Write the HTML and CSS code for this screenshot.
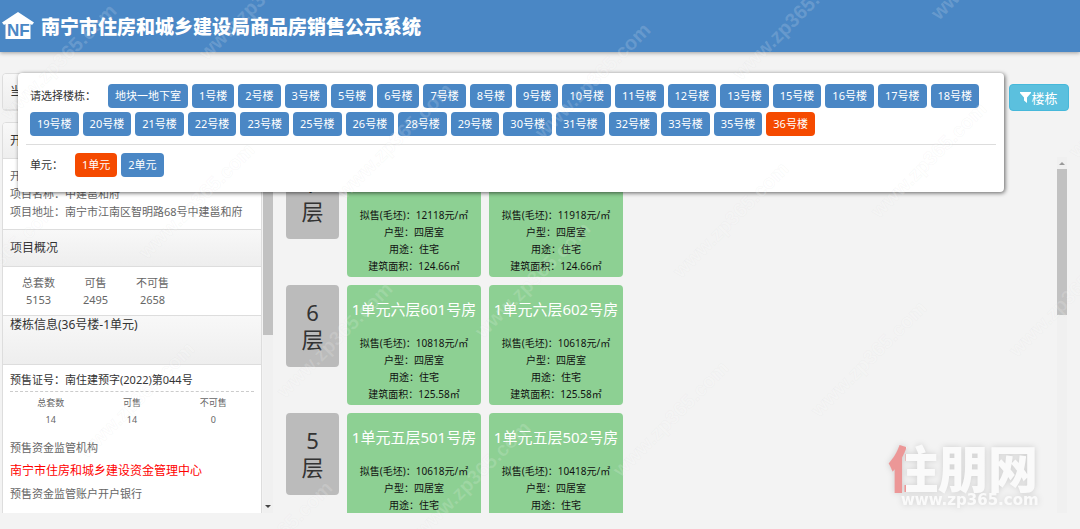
FILE: index.html
```html
<!DOCTYPE html>
<html lang="zh-CN">
<head>
<meta charset="utf-8">
<title>南宁市住房和城乡建设局商品房销售公示系统</title>
<link rel="stylesheet" href="styles.css">
</head>
<body>
<header class="topbar">
  <svg class="topbar-logo" width="34" height="30" viewBox="0 0 34 30" aria-hidden="true">
    <path d="M17 1 33 11.500 31 14 29.500 13V28H4.500V13L3 14 1 11.500Z" fill="#fff"/>
    <text x="6" y="25" class="logo-letters">NF</text>
  </svg>
  <h1 class="topbar-title">南宁市住房和城乡建设局商品房销售公示系统</h1>
</header>

<main class="page">
  <aside class="sidebar">
    <div class="sidebar-content">
      <section class="box box-current"><h2 class="box-head">当前位置</h2></section>
      <section class="box">
        <h2 class="box-head">开发商信息</h2>
        <div class="project">
          <p>开发企业：</p>
          <p>项目名称：中建邕和府</p>
          <p>项目地址：南宁市江南区智明路68号中建邕和府</p>
        </div>
        <h2 class="box-head box-head-next">项目概况</h2>
        <div class="overview">
          <table class="stats">
            <tr><th>总套数</th><th>可售</th><th>不可售</th></tr>
            <tr><td>5153</td><td>2495</td><td>2658</td></tr>
          </table>
        </div>
        <h2 class="box-head box-head-tall">楼栋信息(36号楼-1单元)</h2>
        <div class="building">
          <p class="permit">预售证号：南住建预字(2022)第044号</p>
          <table class="stats stats-wide">
            <tr><th>总套数</th><th>可售</th><th>不可售</th></tr>
            <tr><td>14</td><td>14</td><td>0</td></tr>
          </table>
          <div class="funds">
            <p>预售资金监管机构</p>
            <p class="agency">南宁市住房和城乡建设资金管理中心</p>
            <p>预售资金监管账户开户银行</p>
          </div>
        </div>
      </section>
    </div>
    <div class="scrollbar scrollbar-side" aria-hidden="true"><i class="thumb thumb-side"></i><i class="arrow arrow-down"></i></div>
  </aside>

  <section class="rooms">
    <div class="floors">
      <div class="floor">
        <div class="floor-label">7<br>层</div>
        <article class="room"><h3>1单元七层701号房</h3><p>拟售(毛坯)：12118元/㎡</p><p>户型：四居室</p><p>用途：住宅</p><p>建筑面积：124.66㎡</p></article>
        <article class="room"><h3>1单元七层702号房</h3><p>拟售(毛坯)：11918元/㎡</p><p>户型：四居室</p><p>用途：住宅</p><p>建筑面积：124.66㎡</p></article>
      </div>
      <div class="floor">
        <div class="floor-label">6<br>层</div>
        <article class="room"><h3>1单元六层601号房</h3><p>拟售(毛坯)：10818元/㎡</p><p>户型：四居室</p><p>用途：住宅</p><p>建筑面积：125.58㎡</p></article>
        <article class="room"><h3>1单元六层602号房</h3><p>拟售(毛坯)：10618元/㎡</p><p>户型：四居室</p><p>用途：住宅</p><p>建筑面积：125.58㎡</p></article>
      </div>
      <div class="floor">
        <div class="floor-label">5<br>层</div>
        <article class="room"><h3>1单元五层501号房</h3><p>拟售(毛坯)：10618元/㎡</p><p>户型：四居室</p><p>用途：住宅</p><p>建筑面积：125.58㎡</p></article>
        <article class="room"><h3>1单元五层502号房</h3><p>拟售(毛坯)：10418元/㎡</p><p>户型：四居室</p><p>用途：住宅</p><p>建筑面积：125.58㎡</p></article>
      </div>
    </div>
    <div class="scrollbar" aria-hidden="true"><i class="arrow arrow-up"></i><i class="thumb thumb-main"></i></div>
  </section>

  <section class="picker">
    <div class="choices">
      <span class="choices-label">请选择楼栋：</span>
      <button class="choice">地块一地下室</button>
      <button class="choice">1号楼</button>
      <button class="choice">2号楼</button>
      <button class="choice">3号楼</button>
      <button class="choice">5号楼</button>
      <button class="choice">6号楼</button>
      <button class="choice">7号楼</button>
      <button class="choice">8号楼</button>
      <button class="choice">9号楼</button>
      <button class="choice">10号楼</button>
      <button class="choice">11号楼</button>
      <button class="choice">12号楼</button>
      <button class="choice">13号楼</button>
      <button class="choice">15号楼</button>
      <button class="choice">16号楼</button>
      <button class="choice">17号楼</button>
      <button class="choice">18号楼</button>
      <button class="choice">19号楼</button>
      <button class="choice">20号楼</button>
      <button class="choice">21号楼</button>
      <button class="choice">22号楼</button>
      <button class="choice">23号楼</button>
      <button class="choice">25号楼</button>
      <button class="choice">26号楼</button>
      <button class="choice">28号楼</button>
      <button class="choice">29号楼</button>
      <button class="choice">30号楼</button>
      <button class="choice">31号楼</button>
      <button class="choice">32号楼</button>
      <button class="choice">33号楼</button>
      <button class="choice">35号楼</button>
      <button class="choice choice-active">36号楼</button>
    </div>
    <hr class="picker-line">
    <div class="choices">
      <span class="choices-label">单元：</span>
      <button class="choice choice-active">1单元</button>
      <button class="choice">2单元</button>
    </div>
  </section>

  <button class="filter">
    <svg width="11" height="11" viewBox="0 0 11 11" aria-hidden="true"><path d="M0 0H11V1L7 5.500V11L4 8.500V5.500L0 1Z" fill="#fff"/></svg>楼栋
  </button>
</main>

<svg class="marks" aria-hidden="true">
  <g class="mark-text">
    <text transform="translate(9 121) rotate(-45)">www.zp365.com</text>
    <text transform="translate(207 61) rotate(-45)">www.zp365.com</text>
    <text transform="translate(741 81) rotate(-45)">www.zp365.com</text>
    <text transform="translate(939 21) rotate(-45)">www.zp365.com</text>
    <text transform="translate(-51 320) rotate(-45)">www.zp365.com</text>
    <text transform="translate(147 260) rotate(-45)">www.zp365.com</text>
    <text transform="translate(345 200) rotate(-45)">www.zp365.com</text>
    <text transform="translate(543 140) rotate(-45)">www.zp365.com</text>
    <text transform="translate(-111 519) rotate(-45)">www.zp365.com</text>
    <text transform="translate(87 459) rotate(-45)">www.zp365.com</text>
    <text transform="translate(285 399) rotate(-45)">www.zp365.com</text>
    <text transform="translate(483 339) rotate(-45)">www.zp365.com</text>
    <text transform="translate(681 279) rotate(-45)">www.zp365.com</text>
    <text transform="translate(879 219) rotate(-45)">www.zp365.com</text>
    <text transform="translate(1077 159) rotate(-45)">www.zp365.com</text>
    <text transform="translate(225 598) rotate(-45)">www.zp365.com</text>
    <text transform="translate(423 538) rotate(-45)">www.zp365.com</text>
    <text transform="translate(621 478) rotate(-45)">www.zp365.com</text>
    <text transform="translate(819 418) rotate(-45)">www.zp365.com</text>
    <text transform="translate(1017 358) rotate(-45)">www.zp365.com</text>
  </g>
</svg>

<svg class="brand" width="170" height="80" viewBox="0 0 170 80" role="img" aria-label="住朋网">
  <defs>
    <linearGradient id="brandFill" gradientUnits="userSpaceOnUse" x1="0" y1="0" x2="170" y2="0">
      <stop offset="0.157" stop-color="#ec9797"/><stop offset="0.157" stop-color="#fafafa"/>
    </linearGradient>
  </defs>
  <text x="9" y="54" class="brand-name" fill="url(#brandFill)">住朋网</text>
  <text x="22" y="71" class="brand-url">www.zp365.com</text>
</svg>
</body>
</html>
```
FILE: styles.css
```css
* { box-sizing: border-box; }

body {
  margin: 0;
  height: 100vh;
  overflow: hidden;
  position: relative;
  display: flex;
  flex-direction: column;
  background: #f3f3f3;
  color: #333;
  font: 11px/18px "Noto Sans", "Noto Sans CJK SC", sans-serif;
}

h1, h2, h3, p { margin: 0; font-weight: 400; }
button { font-family: inherit; cursor: pointer; }

.topbar {
  flex: none;
  height: 52px;
  display: flex;
  align-items: center;
  gap: 6px;
  padding-left: 1px;
  background: #4a87c5;
  box-shadow: 0 1px 4px rgba(0, 0, 0, .35);
}
.topbar-logo { flex: none; }
.logo-letters { font: bold 17px "Liberation Sans", sans-serif; fill: #4a87c5; }
.topbar-title { font: 900 19px/28px "Noto Sans CJK SC", sans-serif; color: #fff; }

.page {
  position: relative;
  flex: 1;
  min-height: 0;
  display: flex;
  gap: 13px;
  padding: 21px 13px 16px 2px;
}

.sidebar { flex: none; width: 271px; display: flex; overflow: hidden; }
.sidebar-content { flex: 1; height: 100%; overflow: hidden; }
.box { border: 1px solid #ddd; border-radius: 4px; background: #fff; overflow: hidden; }
.box-current { margin-bottom: 11px; }
.box-head {
  height: 36px;
  padding: 0 7px;
  border-bottom: 1px solid #ddd;
  background: linear-gradient(#f8f8f8, #eee);
  font-size: 12px;
  line-height: 36px;
}
.box-head-next { height: 38px; border-top: 1px solid #ddd; }
.box-head-tall { height: 50px; border-top: 1px solid #ddd; line-height: 18px; }
.project { padding: 8px 7px; color: #666; }
.overview { padding: 7px; }

.stats { border-collapse: collapse; table-layout: fixed; width: 171px; color: #666; line-height: 17px; }
.stats th, .stats td { padding: 0; font-weight: 400; text-align: center; }
.stats-wide { width: 100%; margin-top: 2px; font-size: 9px; }
.building { padding: 6px 7px 20px; }
.permit { padding-bottom: 2px; border-bottom: 1px dashed #ccc; }
.funds { margin-top: 8px; color: #666; line-height: 23px; }
.agency { color: #f00; font-size: 12px; }

.scrollbar {
  flex: none;
  width: 10px;
  display: flex;
  flex-direction: column;
  align-items: center;
  background: #f0f0f0;
}
.scrollbar-side { margin-left: 1px; justify-content: space-between; padding-bottom: 5px; }
.thumb { width: 100%; background: #c1c1c1; }
.thumb-side { height: 262px; }
.thumb-main { height: 146px; margin-top: 4px; }
.arrow { border: 3px solid transparent; }
.arrow-down { border-top-color: #444; border-bottom-width: 0; }
.arrow-up { margin-top: 5px; border-bottom-color: #999; border-top-width: 0; }

.rooms { flex: 1; min-width: 0; display: flex; margin-top: 84px; overflow: hidden; }
.floors { flex: 1; display: flex; flex-direction: column; gap: 8px; overflow: hidden; }
.floor { flex: none; display: flex; align-items: flex-start; gap: 8px; }
.floor-label {
  width: 53px;
  padding: 14px 0;
  border-radius: 4px;
  background: #bbb;
  font-size: 22px;
  line-height: 27px;
  text-align: center;
}
.room {
  width: 134px;
  padding: 14px 0 2px;
  border-radius: 4px;
  background: #8dd093;
  color: #111;
  font-size: 10px;
  line-height: 17px;
  text-align: center;
  white-space: nowrap;
}
.room h3 { margin-bottom: 16px; color: #fff; font-size: 15px; line-height: 20px; }

.picker {
  position: absolute;
  top: 21px;
  left: 18px;
  right: 76px;
  padding: 11px 8px 15px;
  border-radius: 4px;
  background: #fff;
  box-shadow: 1px 1px 4px rgba(0, 0, 0, .6);
}
.choices { display: flex; flex-wrap: wrap; gap: 4px; padding: 0 4px; }
.choices-label { margin-right: 8px; line-height: 24px; }
.choice {
  height: 24px;
  padding: 0 7px;
  border: 0;
  border-radius: 4px;
  background: #4a87c5;
  color: #fff;
  font-size: 11px;
  line-height: 24px;
}
.choice-active { background: #f54a00; }
.picker-line { margin: 8px 0; border: 0; border-top: 1px solid #ddd; }

.filter {
  position: absolute;
  top: 32px;
  right: 11px;
  width: 60px;
  height: 27px;
  display: flex;
  align-items: center;
  justify-content: center;
  padding: 0;
  border: 1px solid #46b8da;
  border-radius: 4px;
  background: #5bc0de;
  color: #fff;
  font-size: 13px;
}

.marks { position: absolute; inset: 0; width: 100%; height: 100%; pointer-events: none; }
.mark-text { font: bold 20px "Liberation Sans", sans-serif; fill: #fff; fill-opacity: .16; stroke: #999; stroke-opacity: .05; }
.brand { position: absolute; right: 31px; bottom: 15px; pointer-events: none; filter: drop-shadow(0 0 3px rgba(0, 0, 0, .15)); }
.brand-name { font: 900 50px "Noto Sans CJK SC", sans-serif; }
.brand-url { font: bold 15px "DejaVu Sans", sans-serif; fill: #fafafa; }
```
